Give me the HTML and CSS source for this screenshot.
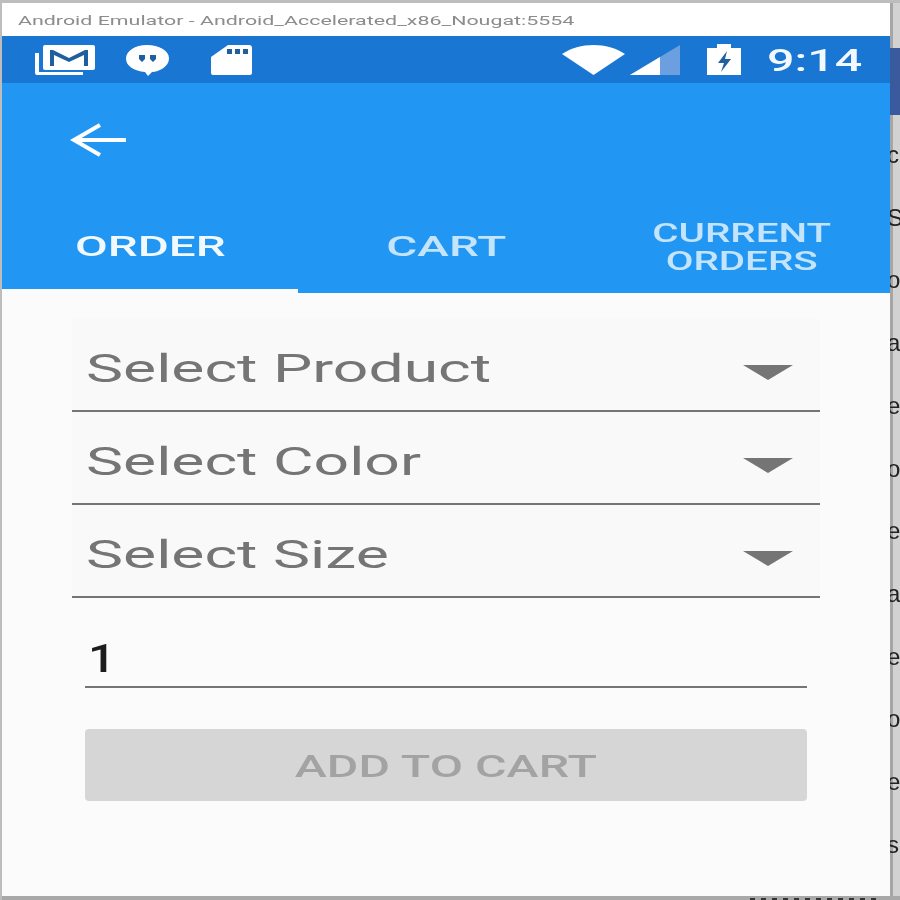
FILE: index.html
```html
<!DOCTYPE html>
<html lang="en">
<head>
  <meta charset="UTF-8">
  <title>Android Emulator</title>
  <link rel="stylesheet" href="styles.css">
</head>
<body>
  <div class="desktop">
    <div class="screen-row">
      <div class="emulator">
        <div class="title-bar"><span class="title-text">Android Emulator - Android_Accelerated_x86_Nougat:5554</span></div>

        <div class="status-bar">
          <div class="status-left">
            <svg class="icon-mail" viewBox="0 0 60 32">
              <path d="M0 9v20a2 2 0 0 0 2 2h46v-3H4V9z" fill="#fff"/>
              <path d="M10 1h48a2 2 0 0 1 2 2v21a2 2 0 0 1-2 2H10a2 2 0 0 1-2-2V3a2 2 0 0 1 2-2z" fill="#fff"/>
              <path d="M15 22V6h3l16 8 16-8h3v16h-4V11L34 18 19 11v11z" fill="#1f5f9e"/>
            </svg>
            <svg class="icon-chat" viewBox="0 0 45 32">
              <path d="M22 1c12 0 22 5.500 22 13.500S34 28 27 28l-4 4-3-4C9 27 1 22 1 14.500S10 1 22 1z" fill="#fff"/>
              <path d="M14 11h6v4l-3 3-3-3zM25 11h6v4l-3 3-3-3z" fill="#1f5f9e"/>
            </svg>
            <svg class="icon-sd" viewBox="0 0 43 32">
              <path d="M18 1h21a3 3 0 0 1 3 3v25a2 2 0 0 1-2 2H3a2 2 0 0 1-2-2V13z" fill="#fff"/>
              <path d="M17 5h5v5h-5zM25 5h5v5h-5zM33 5h5v5h-5z" fill="#1f5f9e"/>
            </svg>
          </div>
          <div class="status-right">
            <svg class="icon-wifi" viewBox="0 0 63 30"><path d="M0 9C9 3 20 0 31.500 0S54 3 63 9L31.500 30z" fill="#fff"/></svg>
            <svg class="icon-signal" viewBox="0 0 50 30">
              <path d="M0 30L50 0v30z" fill="#6b9fe0"/>
              <path d="M0 30L30 12v18z" fill="#fff"/>
            </svg>
            <svg class="icon-battery" viewBox="0 0 34 31">
              <path d="M10 0h14v4h10v27H0V4h10z" fill="#fff"/>
              <path d="M20 7l-9 12h6l-3 9 10-13h-6z" fill="#1f5f9e"/>
            </svg>
            <span class="clock"><span class="clock-text">9:14</span></span>
          </div>
        </div>

        <header class="app-bar">
          <svg class="icon-back" viewBox="0 0 56 34">
            <path d="M56 17H4M30 2L4 17l26 15" fill="none" stroke="#fff" stroke-width="4"/>
          </svg>
        </header>

        <nav class="tabs">
          <div class="tab active"><span class="tab-text">ORDER</span></div>
          <div class="tab"><span class="tab-text">CART</span></div>
          <div class="tab tab-small"><span class="tab-text">CURRENT<br>ORDERS</span></div>
        </nav>

        <main class="form">
          <div class="picker"><span class="picker-label">Select Product</span><span class="caret"></span></div>
          <div class="picker"><span class="picker-label">Select Color</span><span class="caret"></span></div>
          <div class="picker"><span class="picker-label">Select Size</span><span class="caret"></span></div>
          <div class="quantity"><span class="quantity-value">1</span></div>
          <div class="add-button"><span class="button-text">ADD TO CART</span></div>
        </main>
      </div>

      <div class="behind">
        <div class="behind-blue"></div>
        <span>c</span><span>S</span><span>or</span><span>at</span><span>e</span><span>o</span>
        <span>e</span><span>a</span><span>e</span><span>o</span><span>e</span><span>s</span>
      </div>
    </div>
    <div class="bottom-edge"><div class="bottom-marks"></div></div>
  </div>
</body>
</html>
```

FILE: styles.css
```css
* {
  box-sizing: border-box;
}

body {
  margin: 0;
  font-family: Roboto, sans-serif;
  background-color: #bdbdbd;
}

/* the shot is a soft, sideways-stretched photo of an emulator window */
.desktop {
  display: flex;
  flex-direction: column;
  width: 900px;
  height: 900px;
  overflow: hidden;
  padding: 3px 0 0 2px;
  filter: blur(0.5px);
}

.screen-row {
  display: flex;
  height: 893px;
  flex: none;
}

.emulator {
  position: relative;
  z-index: 1;
  width: 888px;
  flex: none;
  display: flex;
  flex-direction: column;
  background-color: #fbfbfb;
}

.title-bar {
  height: 33px;
  flex: none;
  display: flex;
  align-items: center;
  padding-left: 16px;
  background-color: #fff;
  color: #8c8c8c;
  font-size: 13.500px;
}

.title-text {
  display: inline-block;
  white-space: nowrap;
  transform: scaleX(1.585);
  transform-origin: left center;
}

.status-bar {
  height: 47px;
  flex: none;
  display: flex;
  justify-content: space-between;
  align-items: center;
  background-color: #1976d2;
}

.status-left,
.status-right {
  display: flex;
  align-items: center;
}

.status-left {
  padding-left: 33px;
}

.status-right {
  padding-right: 28px;
}

.icon-mail {
  width: 60px;
  height: 32px;
}

.icon-chat {
  width: 45px;
  height: 32px;
  margin-left: 30px;
}

.icon-sd {
  width: 43px;
  height: 32px;
  margin-left: 40px;
}

.icon-wifi {
  width: 63px;
  height: 30px;
}

.icon-signal {
  width: 50px;
  height: 30px;
  margin-left: 5px;
}

.icon-battery {
  width: 34px;
  height: 31px;
  margin-left: 27px;
}

.clock {
  width: 94px;
  margin-left: 27px;
  padding-top: 2px;
  text-align: center;
  color: #f2f8fd;
  font-size: 31px;
  font-weight: 500;
}

.clock-text {
  display: inline-block;
  transform: scaleX(1.56);
}

.app-bar {
  height: 107px;
  flex: none;
  display: flex;
  align-items: center;
  padding: 7px 0 0 68px;
  background-color: #2196f3;
}

.icon-back {
  width: 56px;
  height: 34px;
}

.tabs {
  height: 103px;
  flex: none;
  display: grid;
  grid-template-columns: repeat(3, 1fr);
  background-color: #2196f3;
}

.tab {
  display: flex;
  align-items: center;
  justify-content: center;
  padding-top: 10px;
  text-align: center;
  color: #c4e4fb;
  font-size: 28px;
  font-weight: 500;
  line-height: 28px;
}

.tab-text {
  display: inline-block;
  transform: scaleX(1.7);
}

.tab-small {
  font-size: 26px;
}

.tab-small .tab-text {
  transform: scaleX(1.55);
}

.tab.active {
  color: #f2f9fe;
  border-bottom: 4px solid #fbfbfb;
  padding-top: 14px;
}

.form {
  flex: 1;
  padding: 26px 70px 0;
}

.picker {
  height: 93px;
  display: flex;
  align-items: center;
  justify-content: space-between;
  padding: 8px 27px 0 14px;
  background-color: #f9f9f9;
  border-bottom: 2px solid #757575;
  color: #757575;
  font-size: 39px;
}

.picker-label {
  display: inline-block;
  white-space: nowrap;
  transform: scaleX(1.6);
  transform-origin: left center;
}

.caret {
  width: 0;
  height: 0;
  margin-top: 8px;
  border-left: 25px solid transparent;
  border-right: 25px solid transparent;
  border-top: 15px solid #757575;
}

.quantity {
  height: 90px;
  margin: 0 13px;
  display: flex;
  align-items: flex-end;
  padding: 0 0 4px 3px;
  border-bottom: 2px solid #757575;
  color: #1c1c1c;
  font-size: 39px;
  font-weight: 500;
  line-height: 46px;
}

.quantity-value {
  display: inline-block;
  transform: scaleX(1.25);
  transform-origin: left center;
}

.add-button {
  height: 72px;
  margin: 41px 13px 0;
  display: flex;
  align-items: center;
  justify-content: center;
  padding-top: 2px;
  background-color: #d6d6d6;
  border-radius: 4px;
  color: #a3a3a3;
  font-size: 31px;
  font-weight: 500;
}

.button-text {
  display: inline-block;
  transform: scaleX(1.56);
}

/* slice of the page behind the emulator window */
.behind {
  flex: none;
  width: 10px;
  display: flex;
  flex-direction: column;
  background: linear-gradient(to right, #a6a6a6 0, #a6a6a6 3px, #d2d2d2 3px);
  color: #222;
  font-family: "Liberation Sans", sans-serif;
  font-size: 24px;
  line-height: 62.700px;
  white-space: nowrap;
}

.behind span {
  margin-left: -3px;
}

.behind-blue {
  height: 67px;
  margin: 45px 0 9px;
  flex: none;
  background-color: #3b5a9e;
}

.bottom-edge {
  flex: 1;
  background-color: #a8a8a8;
}

.bottom-marks {
  width: 130px;
  height: 2px;
  margin: 2px 0 0 748px;
  background: repeating-linear-gradient(to right, #333 0, #333 5px, transparent 5px, transparent 11px);
}
```
